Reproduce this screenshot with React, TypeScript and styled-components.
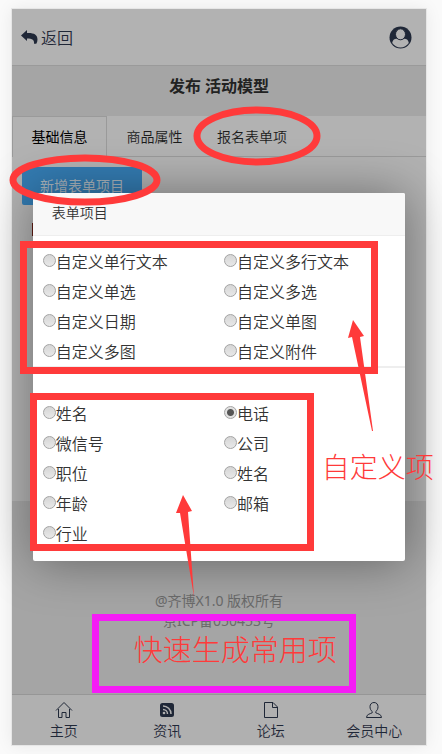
import React, { useState } from "react";
import styled, { createGlobalStyle, css } from "styled-components";

const GlobalStyle = createGlobalStyle`
  * { box-sizing: border-box; }
  body {
    margin: 0;
    background: #fafafa;
    font-family: "Noto Sans", "Noto Sans CJK SC", sans-serif;
    font-size: 14px;
    color: #333;
  }
  button, input { font: inherit; }
`;

const red = "#ff3a3a";
const ink = "#1f2737";

const Screen = styled.div`
  position: relative;
  display: flex;
  flex-direction: column;
  min-height: calc(100vh - 18px);
  margin: 9px 16px 9px 12px;
  background: #a5a5a5;
  box-shadow: 0 0 0 1px #e6e6e6, 0 0 16px rgba(0, 0, 0, 0.08);
`;

const TopBar = styled.header`
  display: flex;
  align-items: center;
  justify-content: space-between;
  height: 57px;
  padding: 0 14px 0 9px;
  background: #b2b2b2;
  border-bottom: 1px solid #9a9a9a;
`;

const BackLink = styled.a`
  display: flex;
  align-items: center;
  gap: 3px;
  color: ${ink};
  font-family: "Noto Sans CJK SC", sans-serif;
  font-size: 16px;
  font-weight: 350;
  text-decoration: none;
`;

const AccountLink = styled.a`
  display: flex;
`;

const Title = styled.h1`
  margin: 0;
  font-size: 16px;
  font-weight: 600;
  line-height: 40px;
  padding-bottom: 10px;
  text-align: center;
  color: #222;
`;

const Tabs = styled.nav`
  display: flex;
  height: 41px;
  background: #b2b2b2;
  border-bottom: 1px solid #9a9a9a;
`;

const Tab = styled.button<{ $active?: boolean }>`
  min-width: 95px;
  height: 41px;
  padding: 0 14px 2px;
  border: 1px solid transparent;
  border-bottom: 0;
  background: none;
  color: #1c1c1c;
  font-weight: 350;
  white-space: nowrap;
  ${(p) =>
    p.$active &&
    css`
      border-color: #9a9a9a;
      background: #b2b2b2;
      color: #000;
      font-weight: 400;
    `}
`;

const Content = styled.main`
  height: 344px;
  padding: 10px;
  background: #b2b2b2;
`;

const AddButton = styled.button`
  height: 38px;
  padding: 0 18px 2px;
  border: 0;
  border-radius: 2px;
  background: #337bb1;
  color: #a9b4bc;
`;

const FieldMark = styled.div`
  width: 4px;
  height: 13px;
  margin: 18px 0 0 10px;
  background: #5f1a12;
`;

const Copyright = styled.footer`
  flex: 1;
  padding-top: 90px;
  line-height: 20px;
  text-align: center;
  color: #6a6a6a;
`;

const BottomNav = styled.nav`
  display: flex;
  height: 51px;
  border-top: 1px solid #969696;
  background: #b0b0b0;
`;

const NavLink = styled.a`
  flex: 1;
  display: flex;
  flex-direction: column;
  align-items: center;
  padding-top: 6px;
  line-height: 24px;
  font-weight: 350;
  color: ${ink};
  text-decoration: none;
`;

const Overlay = styled.div`
  position: absolute;
  inset: 0;
  display: flex;
  align-items: center;
  justify-content: center;
`;

const Dialog = styled.section`
  position: relative;
  width: 90%;
  border-radius: 2px;
  background: #fff;
  box-shadow: 1px 1px 50px rgba(0, 0, 0, 0.4);
`;

const DialogTitle = styled.h2`
  margin: 0;
  padding: 0 19px;
  height: 43px;
  border-bottom: 1px solid #eee;
  border-radius: 2px 2px 0 0;
  background: #f8f8f8;
  font-size: 14px;
  font-weight: 350;
  line-height: 40px;
`;

const Options = styled.div`
  display: grid;
  grid-template-columns: 1fr 1fr;
  padding: 10px 0 0 10px;

  & + & {
    padding: 30px 0 13px 10px;
    border-top: 2px solid #eee;
  }
`;

const Option = styled.label`
  display: flex;
  align-items: center;
  height: 30px;
  font-family: "Noto Sans CJK SC", sans-serif;
  font-size: 16px;
  font-weight: 350;
  line-height: 28px;
`;

const Radio = styled.input`
  appearance: none;
  flex: none;
  width: 13px;
  height: 13px;
  margin: 0 0 2px;
  border: 1px solid #a3a3a3;
  border-radius: 50%;
  background: linear-gradient(#d6d6d6, #e8e8e8);
  &:checked {
    background: radial-gradient(circle, #555 0 3px, #e2e2e2 4px);
  }
`;

const Marks = styled.svg`
  position: absolute;
  left: 0;
  top: 0;
  width: 100%;
  height: 100%;
  overflow: visible;
  pointer-events: none;
`;

const Frame = styled.div<{ $x: number; $y: number; $w: number; $h: number; $color?: string }>`
  position: absolute;
  left: ${(p) => p.$x}px;
  top: ${(p) => p.$y}px;
  width: ${(p) => p.$w}px;
  height: ${(p) => p.$h}px;
  border: 7px solid ${(p) => p.$color ?? red};
  pointer-events: none;
`;

const Note = styled.p<{ $x: number; $y: number; $size: number }>`
  position: absolute;
  left: ${(p) => p.$x}px;
  top: ${(p) => p.$y}px;
  margin: 0;
  font-size: ${(p) => p.$size}px;
  font-weight: 300;
  line-height: 40px;
  white-space: nowrap;
  color: ${red};
`;

const ReplyIcon = () => (
  <svg width="17" height="16" viewBox="0 0 17 16" fill={ink} aria-hidden="true">
    <path d="M0 6.5 6 1v3c6.500-.4 10.500 1.500 10.500 6.500 0 1.500-.4 3-1.200 4.200h-2.300c.6-3.500-1.500-5.200-7-5.200V12z" />
  </svg>
);

const AccountIcon = () => (
  <svg width="23" height="23" viewBox="0 0 23 23" aria-hidden="true">
    <circle cx="11.500" cy="11.500" r="11" fill={ink} />
    <path d="M3.200 17c.3-3 2.300-4.500 4.800-4.300 2 1.600 5 1.600 7 0 2.500-.2 4.500 1.300 4.800 4.300a10 10 0 0 1-16.600 0z" fill="#b2b2b2" />
    <ellipse cx="11.500" cy="8.300" rx="5" ry="5.500" fill="#b2b2b2" stroke={ink} />
  </svg>
);

const navIcons = {
  home: (
    <svg width="18" height="18" viewBox="0 0 18 18" fill="none" stroke={ink} aria-hidden="true">
      <path d="M1 9.500 9 1.500l8 8M3.500 8v8.500h3.500v-5h4v5h3.500V8" />
    </svg>
  ),
  feed: (
    <svg width="18" height="18" viewBox="0 0 18 18" fill="none" aria-hidden="true">
      <rect x="2" y="2" width="14" height="14" rx="2.500" fill={ink} />
      <path d="M5 5a8 8 0 0 1 8 8M5 8.500a4.500 4.500 0 0 1 4.500 4.500" stroke="#b0b0b0" strokeWidth="1.500" />
      <circle cx="6" cy="12" r="1.300" fill="#b0b0b0" />
    </svg>
  ),
  page: (
    <svg width="18" height="18" viewBox="0 0 18 18" fill="none" stroke={ink} aria-hidden="true">
      <path d="M2.500 1.500h8.500l4.500 4.500v10.500h-13zM10.500 1.500v5h5" />
    </svg>
  ),
  member: (
    <svg width="18" height="18" viewBox="0 0 18 18" fill="none" stroke={ink} aria-hidden="true">
      <path d="M9 1.500c-2.500 0-4 1.800-4 4.200 0 2 .8 3.800 2.200 4.800v1.300c-1.500 1-5.700 1.200-5.700 4.700h15c0-3.500-4.200-3.700-5.700-4.700v-1.300c1.400-1 2.200-2.800 2.200-4.800 0-2.400-1.500-4.200-4-4.200z" />
    </svg>
  ),
};

const customFields = ["自定义单行文本", "自定义多行文本", "自定义单选", "自定义多选", "自定义日期", "自定义单图", "自定义多图", "自定义附件"];
const commonFields = ["姓名", "电话", "微信号", "公司", "职位", "姓名", "年龄", "邮箱", "行业"];

export default function App() {
  const [picked, setPicked] = useState("common-1");
  const renderOptions = (group: string, labels: string[]) => (
    <Options>
      {labels.map((label, i) => {
        const id = `${group}-${i}`;
        return (
          <Option key={id}>
            <Radio type="radio" name="field" value={id} checked={picked === id} onChange={() => setPicked(id)} />
            {label}
          </Option>
        );
      })}
    </Options>
  );

  return (
    <>
      <GlobalStyle />
      <Screen>
        <TopBar>
          <BackLink href="#back"><ReplyIcon />返回</BackLink>
          <AccountLink href="#account" aria-label="会员中心"><AccountIcon /></AccountLink>
        </TopBar>
        <Title>发布 活动模型</Title>
        <Tabs>
          <Tab $active>基础信息</Tab>
          <Tab>商品属性</Tab>
          <Tab>报名表单项</Tab>
        </Tabs>
        <Content>
          <AddButton>新增表单项目</AddButton>
          <FieldMark />
        </Content>
        <Copyright>
          @齐博X1.0 版权所有<br />京ICP备050453号
        </Copyright>
        <BottomNav>
          <NavLink href="#home">{navIcons.home}主页</NavLink>
          <NavLink href="#news">{navIcons.feed}资讯</NavLink>
          <NavLink href="#forum">{navIcons.page}论坛</NavLink>
          <NavLink href="#member">{navIcons.member}会员中心</NavLink>
        </BottomNav>

        <Overlay>
          <Dialog role="dialog" aria-labelledby="dialog-title">
            <DialogTitle id="dialog-title">表单项目</DialogTitle>
            {renderOptions("custom", customFields)}
            {renderOptions("common", commonFields)}
            <Frame $x={-13} $y={48} $w={358} $h={133} />
            <Frame $x={-3} $y={200} $w={284} $h={158} />
            <Frame $x={59} $y={421} $w={264} $h={79} $color="#f51cf5" />
            <Marks fill={red} aria-hidden="true">
              <path d="M320 127l11 16-4 1 13 94h-1l-20-94-4 1z" />
              <path d="M150 302l9 16-4 1 6 85-14-84-4 0z" />
            </Marks>
            <Note $x={289} $y={254} $size={28}>自定义项</Note>
            <Note $x={101} $y={437} $size={29}>快速生成常用项</Note>
          </Dialog>
        </Overlay>
        <Marks fill="none" stroke={red} strokeWidth="7" aria-hidden="true">
          <ellipse cx="245" cy="127" rx="60" ry="26" />
          <ellipse cx="73" cy="171" rx="72" ry="22" />
        </Marks>
      </Screen>
    </>
  );
}
